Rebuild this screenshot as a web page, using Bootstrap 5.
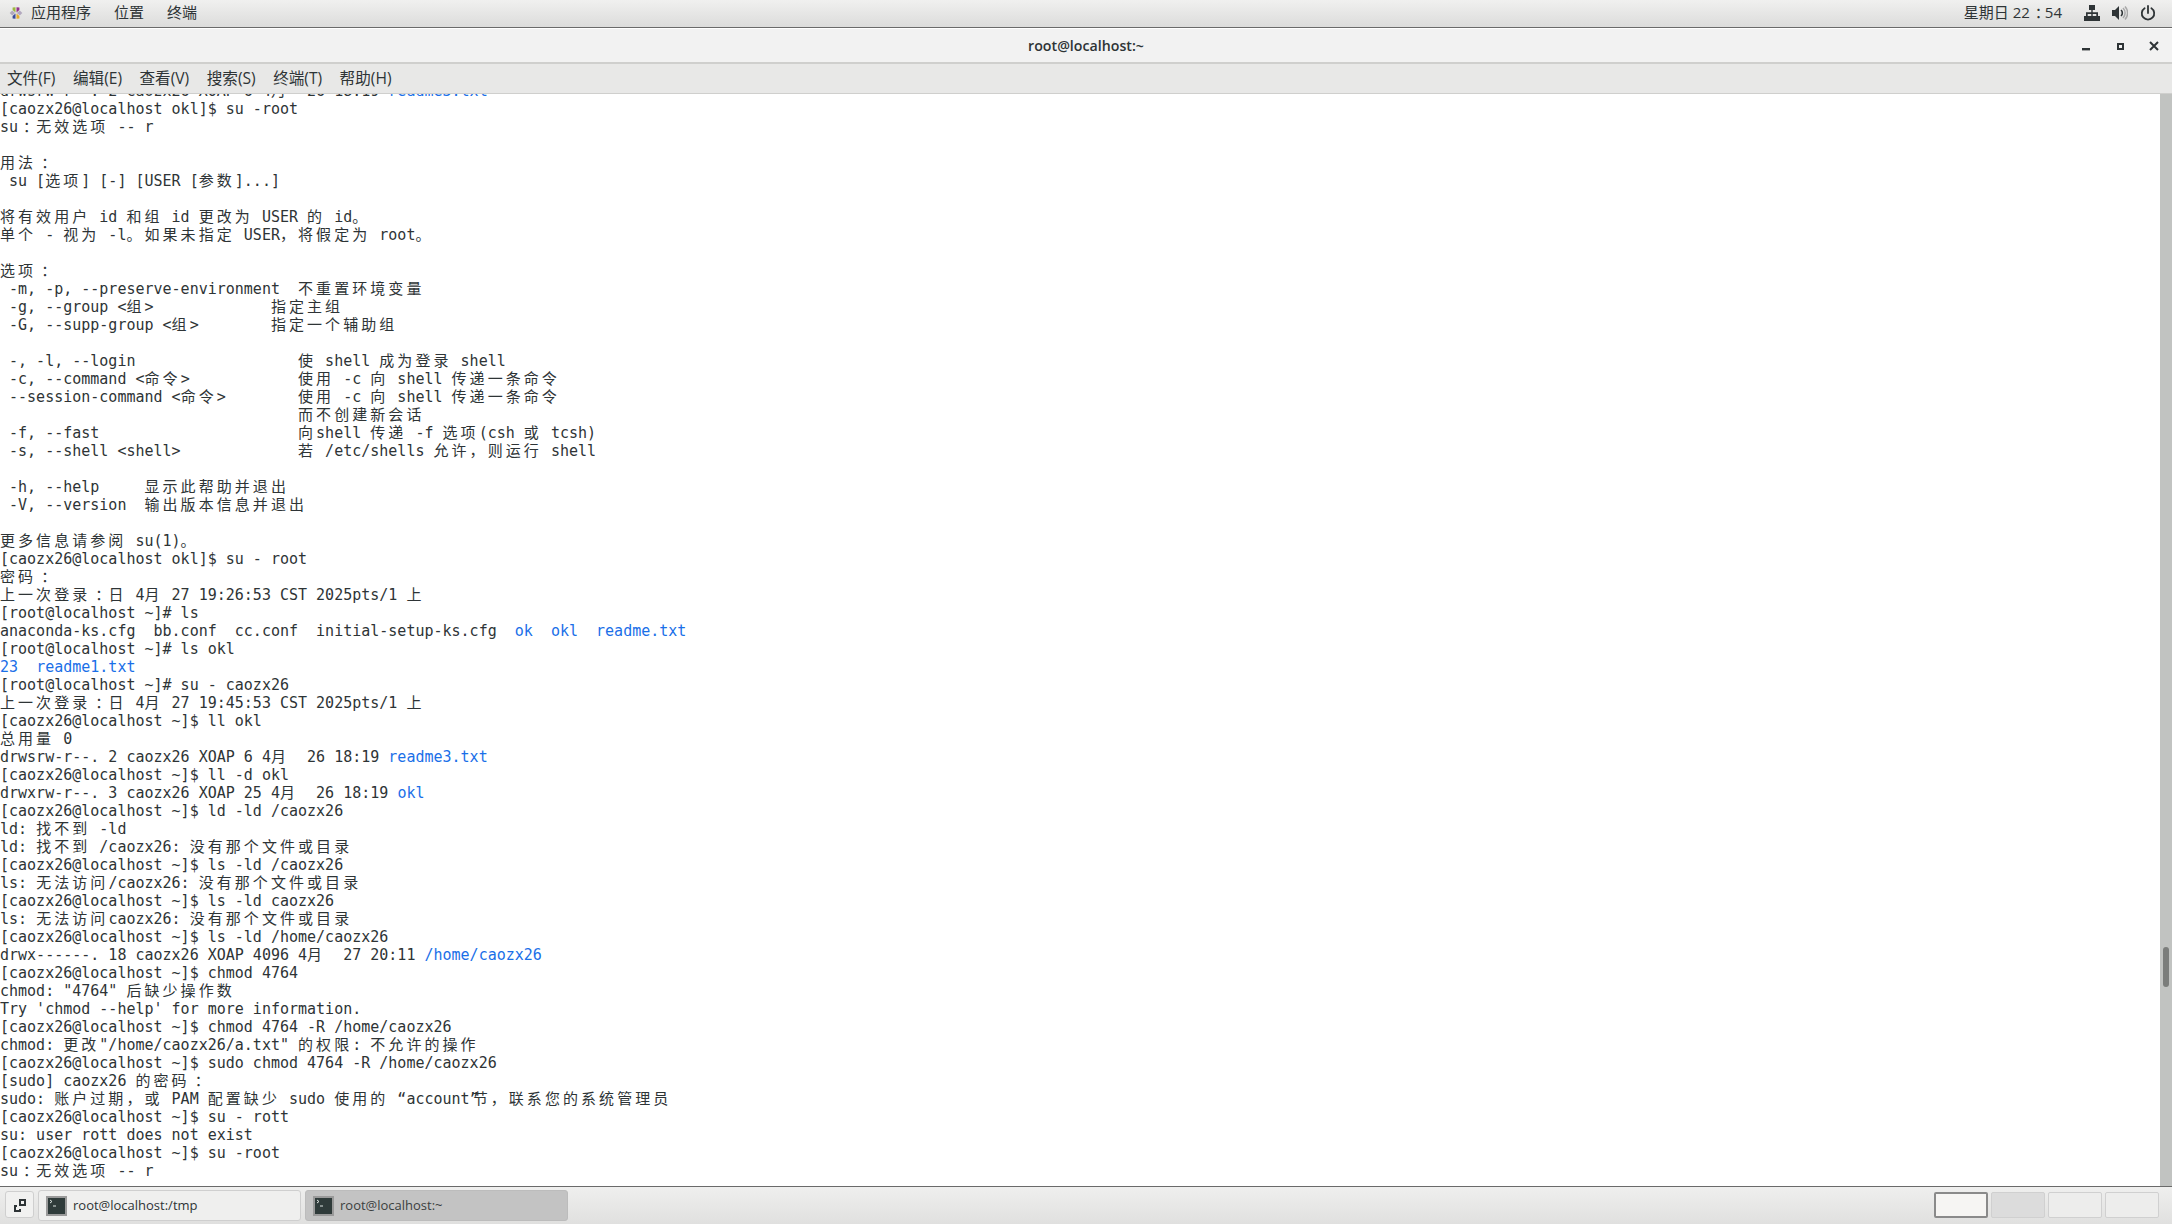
<!DOCTYPE html>
<html lang="zh-CN">
<head>
<meta charset="utf-8">
<title>root@localhost:~</title>
<link href="https://cdn.jsdelivr.net/npm/bootstrap@5.3.0/dist/css/bootstrap.min.css" rel="stylesheet">
<style>
html,body{height:100%;margin:0;overflow:hidden}
body{font-family:"Open Sans","Noto Sans CJK SC",sans-serif;color:#2e3436;background:#fff}
.topbar{height:28px;background:linear-gradient(#f0f0ef,#dcdcdb);border-bottom:1px solid #6a6a6a;font-size:15px;padding:0 0 2px 9px}
.topbar .tb-menu{margin-right:23px}
.clock{font-size:15px;margin-right:22px;color:#2e3436}
.clock-colon{margin-left:5px;margin-right:-5px}
.pw-ic{margin-right:16px}
.titlebar{height:36px;background:#f2f2f2;border-top:1px solid #fff;border-bottom:2px solid #cfcfcd;position:relative}
.titletext{font-weight:600;font-size:14.2px;color:#2e3436}
.winbtns{position:absolute;right:13px;top:0;bottom:0;gap:24px}
.menubar{height:30px;background:#e8e8e7;border-bottom:1px solid #cfcfcd;font-size:15.6px;line-height:24px;padding:0 0 2px 7px;gap:17.5px;color:#2e3436}
.termwrap{flex:1 1 auto;min-height:0;overflow:hidden;background:#fff}
.term{flex:1 1 auto;min-width:0;overflow:hidden}
.termtext{margin:-12px 0 0 0;padding:0;font-family:"DejaVu Sans Mono","Noto Sans CJK SC",monospace;font-size:15px;line-height:18px;color:#2e3436}
.termtext div{height:18px;white-space:pre}
.cj{letter-spacing:3.06px;font-family:"Noto Sans CJK SC",sans-serif;font-size:15px;line-height:0}
.ct{margin-left:5px;margin-right:-5px}
.qe{margin-right:-6px}
.lk{color:#1a6fe8}
.sbar{width:12px;background:#c1c3c1;flex:0 0 12px;padding:853px 3px 0 3px}
.sthumb{height:40px;width:6px;background:#7b7d7b;border-radius:3px}
.taskbar{height:38px;background:linear-gradient(#efefee,#e0e0df);border-top:1px solid #6a6a6a;padding:3px 13px 0 5px}
.showdesk{width:29px;height:27px;margin-top:1px;border:1px solid #cfcfcf;border-radius:3px;background:#f1f1f0}
.tasklabel{height:31px;width:263px;border:1px solid #cfcfcf;border-radius:3px;background:#efefee;font-size:13px;padding-left:7px;gap:6px;margin-left:4px;color:#2e3436}
.tasklabel.on{background:#c3c3c3;border-color:#bcbcbc;color:#3b3f40}
.tasklabel svg{flex:0 0 21px}
.pager{margin-left:auto;gap:3px;margin-top:2px;height:26px}
.ws{width:54px;background:#ededec;border:1px solid #d0d0d0;border-radius:2px}
.ws.cur{background:#f6f5f3;border:2px solid #8a8a8a}
.ws.mid{background:#dcdcdc}
</style>
</head>
<body class="d-flex flex-column">
<div class="topbar d-flex align-items-center flex-shrink-0">
  <svg width="14" height="14" viewBox="0 0 14 14" class="me-2" aria-hidden="true">
    <path d="M6.5 1.2 3.6 1.6 3.6 4 6.5 6.5Z" fill="#9cb73f"/>
    <path d="M7.5 1.2 10.4 1.6 10.4 4 7.5 6.5Z" fill="#93338a"/>
    <path d="M6.5 12.8 3.6 12.4 3.6 10 6.5 7.5Z" fill="#3a4a9a"/>
    <path d="M7.5 12.8 10.4 12.4 10.4 10 7.5 7.5Z" fill="#e6ab2c"/>
    <path d="M6.2 7 3.2 4.4 .7 7 3.2 9.6ZM7.8 7 10.8 4.4 13.3 7 10.8 9.6Z" fill="#b3a9bf"/>
  </svg>
  <span class="tb-menu">应用程序</span><span class="tb-menu">位置</span><span class="tb-menu">终端</span>
  <span class="clock ms-auto">星期日 22<span class="clock-colon">：</span>54</span>
  <svg width="16" height="16" viewBox="0 0 16 16" class="me-2" aria-hidden="true"><path fill="#2e3436" d="M5 0h6v5H8.7v2.2H14V11h2v5h-6v-5h2.3V9H8.7v2H11v5H5v-5h2.3V9H3.7v2H6v5H0v-5h2V7.2h5.3V5H5z"/></svg>
  <svg width="16" height="16" viewBox="0 0 16 16" class="me-2 ms-1" aria-hidden="true"><path fill="#2e3436" d="M0 5h3l4-4v14l-4-4H0z"/><path fill="none" stroke="#2e3436" stroke-width="1.6" d="M9 5a4 4 0 0 1 0 6"/><path fill="none" stroke="#a8a8a8" stroke-width="1.5" d="M11 3a7 7 0 0 1 0 10M13 1.5a9.5 9.5 0 0 1 0 13"/></svg>
  <svg width="16" height="16" viewBox="0 0 16 16" class="pw-ic ms-1" aria-hidden="true"><path fill="none" stroke="#2e3436" stroke-width="1.8" stroke-linecap="round" d="M4.6 3.2a6.2 6.2 0 1 0 6.8 0M8 1v7"/></svg>
</div>
<div class="titlebar d-flex align-items-center justify-content-center flex-shrink-0">
  <span class="titletext">root@localhost:~</span>
  <div class="winbtns d-flex align-items-center">
    <svg width="10" height="10" viewBox="0 0 10 10" aria-hidden="true"><rect x="1" y="7" width="8" height="2.4" fill="#2e3436"/></svg>
    <svg width="10" height="10" viewBox="0 0 10 10" aria-hidden="true"><path fill="none" stroke="#2e3436" stroke-width="2" d="M3 3h5v5H3z"/></svg>
    <svg width="10" height="10" viewBox="0 0 10 10" aria-hidden="true"><path stroke="#2e3436" stroke-width="2" d="M1 1l8 8M9 1l-8 8"/></svg>
  </div>
</div>
<div class="menubar d-flex align-items-center flex-shrink-0">
  <span>文件(F)</span><span>编辑(E)</span><span>查看(V)</span><span>搜索(S)</span><span>终端(T)</span><span>帮助(H)</span>
</div>
<div class="termwrap d-flex">
<div class="term">
<div class="termtext"><div>drwsrw-r--. 2 caozx26 XOAP 6 4<span class="cj">月</span>  26 18:19 <span class="lk">readme3.txt</span></div>
<div>[caozx26@localhost okl]$ su -root</div>
<div>su<span class="cj ct">：</span><span class="cj">无效选项</span> -- r</div>
<div></div>
<div><span class="cj">用法</span><span class="cj ct">：</span></div>
<div> su [<span class="cj">选项</span>] [-] [USER [<span class="cj">参数</span>]...]</div>
<div></div>
<div><span class="cj">将有效用户</span> id <span class="cj">和组</span> id <span class="cj">更改为</span> USER <span class="cj">的</span> id<span class="cj">。</span></div>
<div><span class="cj">单个</span> - <span class="cj">视为</span> -l<span class="cj">。如果未指定</span> USER<span class="cj">，将假定为</span> root<span class="cj">。</span></div>
<div></div>
<div><span class="cj">选项</span><span class="cj ct">：</span></div>
<div> -m, -p, --preserve-environment  <span class="cj">不重置环境变量</span></div>
<div> -g, --group &lt;<span class="cj">组</span>&gt;             <span class="cj">指定主组</span></div>
<div> -G, --supp-group &lt;<span class="cj">组</span>&gt;        <span class="cj">指定一个辅助组</span></div>
<div></div>
<div> -, -l, --login                  <span class="cj">使</span> shell <span class="cj">成为登录</span> shell</div>
<div> -c, --command &lt;<span class="cj">命令</span>&gt;            <span class="cj">使用</span> -c <span class="cj">向</span> shell <span class="cj">传递一条命令</span></div>
<div> --session-command &lt;<span class="cj">命令</span>&gt;        <span class="cj">使用</span> -c <span class="cj">向</span> shell <span class="cj">传递一条命令</span></div>
<div>                                 <span class="cj">而不创建新会话</span></div>
<div> -f, --fast                      <span class="cj">向</span>shell <span class="cj">传递</span> -f <span class="cj">选项</span>(csh <span class="cj">或</span> tcsh)</div>
<div> -s, --shell &lt;shell&gt;             <span class="cj">若</span> /etc/shells <span class="cj">允许，则运行</span> shell</div>
<div></div>
<div> -h, --help     <span class="cj">显示此帮助并退出</span></div>
<div> -V, --version  <span class="cj">输出版本信息并退出</span></div>
<div></div>
<div><span class="cj">更多信息请参阅</span> su(1)<span class="cj">。</span></div>
<div>[caozx26@localhost okl]$ su - root</div>
<div><span class="cj">密码</span><span class="cj ct">：</span></div>
<div><span class="cj">上一次登录</span><span class="cj ct">：</span><span class="cj">日</span> 4<span class="cj">月</span> 27 19:26:53 CST 2025pts/1 <span class="cj">上</span></div>
<div>[root@localhost ~]# ls</div>
<div>anaconda-ks.cfg  bb.conf  cc.conf  initial-setup-ks.cfg  <span class="lk">ok</span>  <span class="lk">okl</span>  <span class="lk">readme.txt</span></div>
<div>[root@localhost ~]# ls okl</div>
<div><span class="lk">23</span>  <span class="lk">readme1.txt</span></div>
<div>[root@localhost ~]# su - caozx26</div>
<div><span class="cj">上一次登录</span><span class="cj ct">：</span><span class="cj">日</span> 4<span class="cj">月</span> 27 19:45:53 CST 2025pts/1 <span class="cj">上</span></div>
<div>[caozx26@localhost ~]$ ll okl</div>
<div><span class="cj">总用量</span> 0</div>
<div>drwsrw-r--. 2 caozx26 XOAP 6 4<span class="cj">月</span>  26 18:19 <span class="lk">readme3.txt</span></div>
<div>[caozx26@localhost ~]$ ll -d okl</div>
<div>drwxrw-r--. 3 caozx26 XOAP 25 4<span class="cj">月</span>  26 18:19 <span class="lk">okl</span></div>
<div>[caozx26@localhost ~]$ ld -ld /caozx26</div>
<div>ld: <span class="cj">找不到</span> -ld</div>
<div>ld: <span class="cj">找不到</span> /caozx26: <span class="cj">没有那个文件或目录</span></div>
<div>[caozx26@localhost ~]$ ls -ld /caozx26</div>
<div>ls: <span class="cj">无法访问</span>/caozx26: <span class="cj">没有那个文件或目录</span></div>
<div>[caozx26@localhost ~]$ ls -ld caozx26</div>
<div>ls: <span class="cj">无法访问</span>caozx26: <span class="cj">没有那个文件或目录</span></div>
<div>[caozx26@localhost ~]$ ls -ld /home/caozx26</div>
<div>drwx------. 18 caozx26 XOAP 4096 4<span class="cj">月</span>  27 20:11 <span class="lk">/home/caozx26</span></div>
<div>[caozx26@localhost ~]$ chmod 4764</div>
<div>chmod: "4764" <span class="cj">后缺少操作数</span></div>
<div>Try 'chmod --help' for more information.</div>
<div>[caozx26@localhost ~]$ chmod 4764 -R /home/caozx26</div>
<div>chmod: <span class="cj">更改</span>"/home/caozx26/a.txt" <span class="cj">的权限</span>: <span class="cj">不允许的操作</span></div>
<div>[caozx26@localhost ~]$ sudo chmod 4764 -R /home/caozx26</div>
<div>[sudo] caozx26 <span class="cj">的密码</span><span class="cj ct">：</span></div>
<div>sudo: <span class="cj">账户过期，或</span> PAM <span class="cj">配置缺少</span> sudo <span class="cj">使用的</span> “account<span class="qe">”</span><span class="cj">节，联系您的系统管理员</span></div>
<div>[caozx26@localhost ~]$ su - rott</div>
<div>su: user rott does not exist</div>
<div>[caozx26@localhost ~]$ su -root</div>
<div>su<span class="cj ct">：</span><span class="cj">无效选项</span> -- r</div>
</div>
</div>
<div class="sbar"><div class="sthumb"></div></div>
</div>
<div class="taskbar d-flex flex-shrink-0">
  <div class="showdesk d-flex align-items-center justify-content-center">
    <svg width="14" height="14" viewBox="0 0 14 14" aria-hidden="true"><path fill="#2e3436" d="M6 1h7v7H6zM8 3v3h3V3zM1 7h3v2H3v3h3v-1h2v3H1z"/></svg>
  </div>
  <div class="tasklabel d-flex align-items-center">
    <svg width="21" height="20" viewBox="0 0 21 20" aria-hidden="true"><rect x="1" y="1" width="19" height="18" fill="#2f3b3a" stroke="#9a9a9a" stroke-width="2"/><path stroke="#dfe6e3" fill="none" d="M4 4l2 1.5L4 7M7 10h3"/></svg>
    <span>root@localhost:/tmp</span>
  </div>
  <div class="tasklabel on d-flex align-items-center">
    <svg width="21" height="20" viewBox="0 0 21 20" aria-hidden="true"><rect x="1" y="1" width="19" height="18" fill="#2f3b3a" stroke="#9a9a9a" stroke-width="2"/><path stroke="#dfe6e3" fill="none" d="M4 4l2 1.5L4 7M7 10h3"/></svg>
    <span>root@localhost:~</span>
  </div>
  <div class="pager d-flex">
    <div class="ws cur"></div><div class="ws mid"></div><div class="ws"></div><div class="ws"></div>
  </div>
</div>
<script src="https://cdn.jsdelivr.net/npm/bootstrap@5.3.0/dist/js/bootstrap.bundle.min.js"></script>
</body>
</html>
